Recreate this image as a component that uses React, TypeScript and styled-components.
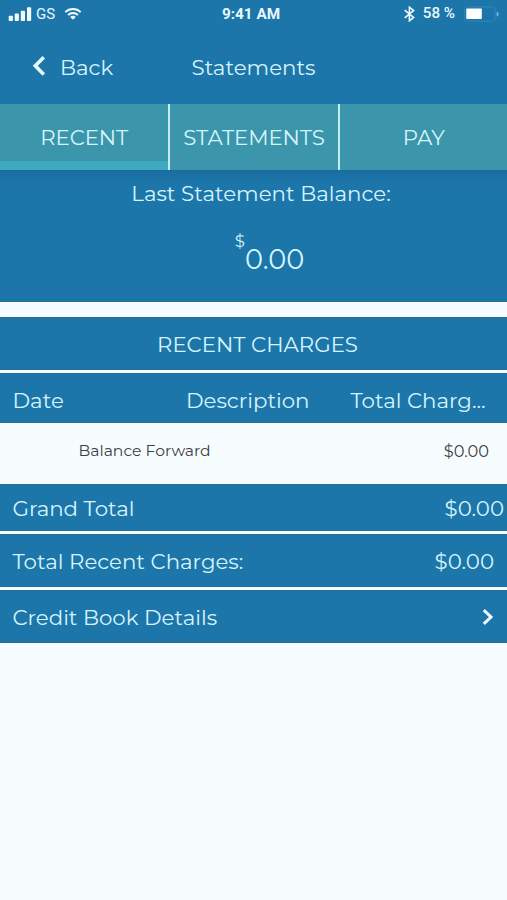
import React from "react";
import styled, { createGlobalStyle } from "styled-components";

const GlobalStyle = createGlobalStyle`
  * { box-sizing: border-box; }
  body { margin: 0; background: #f7fcff; }
`;

const BLUE = "#1c76aa";
const TEAL = "#3b96ab";
const PALE = "#d6f4fb";
const PAPER = "#f7fcff";

const Screen = styled.main`
  width: 507px;
  height: 900px;
  overflow: hidden;
  display: flex;
  flex-direction: column;
  background: ${PAPER};
  color: ${PALE};
  font-family: Montserrat, Inter, sans-serif;
  font-size: 21.3px;
  line-height: 26px;
  white-space: nowrap;
`;

const StatusBar = styled.div`
  flex: none;
  display: grid;
  grid-template-columns: 1fr auto 1fr;
  align-items: center;
  height: 28px;
  padding: 0 7px 0 8px;
  background: ${BLUE};
  color: #e9f8ff;
  font-family: Roboto, sans-serif;
  font-size: 15px;
  line-height: 18px;
`;

const StatusGroup = styled.div<{ $end?: boolean }>`
  display: flex;
  align-items: center;
  justify-content: ${(p) => (p.$end ? "flex-end" : "flex-start")};
`;

const Carrier = styled.span`
  margin: 0 9px 0 4px;
  font-size: 15px;
`;

const Clock = styled.span`
  margin-right: 6px;
  font-weight: 700;
  font-size: 15.3px;
`;

const BatteryLevel = styled.span`
  padding-bottom: 2px;
  margin: 0 9px 0 8px;
  font-size: 15.2px;
  font-weight: 500;
`;

const Header = styled.header`
  flex: none;
  display: grid;
  grid-template-columns: 1fr auto 1fr;
  align-items: center;
  height: 75.5px;
  padding: 2px 0 0 32px;
  background: ${BLUE};
`;

const BackLink = styled.div`
  display: flex;
  align-items: center;
  gap: 14px;
`;

const BackGlyph = styled.svg`
  margin-bottom: 2px;
`;

const Title = styled.div`
  margin-right: 32px;
`;

const Tabs = styled.nav`
  flex: none;
  display: grid;
  grid-template-columns: 169.5px 170px 1fr;
  height: 66.5px;
  background: ${TEAL};
`;

const Tab = styled.div<{ $active?: boolean; $last?: boolean }>`
  display: flex;
  align-items: center;
  justify-content: center;
  padding: 1px 0 0 1px;
  letter-spacing: -0.1px;
  border-right: ${(p) => (p.$last ? "none" : "2px solid #c3ecf0")};
  box-shadow: ${(p) => (p.$active ? "inset 0 -9px 0 #40a9c2" : "none")};
`;

const Balance = styled.section`
  flex: none;
  display: flex;
  flex-direction: column;
  align-items: center;
  height: 132px;
  padding: 10px 0 0 15px;
  background: linear-gradient(#1a6c9e, ${BLUE} 12px);
  box-shadow: inset 0 -1px 0 #2a7095;
`;

const BalanceLabel = styled.div``;

const Amount = styled.div`
  display: flex;
  align-items: flex-start;
  margin: 24px 0 0 17px;
`;

const Currency = styled.span`
  font-size: 16.5px;
  line-height: 22px;
`;

const AmountValue = styled.span`
  padding-top: 13px;
  font-size: 27.2px;
  line-height: 34px;
`;

const Band = styled.div<{ $height: number; $gap?: number; $right?: number }>`
  flex: none;
  display: flex;
  align-items: center;
  justify-content: space-between;
  height: ${(p) => p.$height}px;
  margin-top: ${(p) => p.$gap ?? 0}px;
  padding: 0 ${(p) => p.$right ?? 13}px 0 12.5px;
  background: ${BLUE};
  box-shadow: inset 0 1px 0 #2a7095, inset 0 -1px 0 #2a7095;
`;

const SectionTitle = styled(Band)`
  justify-content: center;
  padding: 0 0 0 8px;
`;

const Columns = styled(Band)`
  display: grid;
  grid-template-columns: 173.5px 164.5px 1fr;
  padding-top: 3px;
`;

const Entry = styled.div`
  flex: none;
  display: grid;
  grid-template-columns: 1fr auto;
  align-items: center;
  height: 61px;
  padding: 0 18px 5px 78.5px;
  color: #3c4043;
  font-size: 15.6px;
`;

const EntryAmount = styled.span`
  font-size: 16.2px;
`;

const SignalIcon = () => (
  <svg width="24" height="16" viewBox="0 0 24 16" fill="#f2fbff">
    <rect x="0.7" y="9.8" width="4.2" height="5.2" rx="0.8" />
    <rect x="6.7" y="7.6" width="4.2" height="7.4" rx="0.8" />
    <rect x="12.8" y="4.8" width="4.2" height="10.2" rx="0.8" />
    <rect x="19" y="1.2" width="4.2" height="13.8" rx="0.8" />
  </svg>
);

const WifiIcon = () => (
  <svg width="18" height="14" viewBox="0 0 18 14" fill="none" stroke="#f2fbff" strokeWidth="2">
    <path d="M1.3 5.1C5.6.9 12.4.9 16.7 5.1" />
    <path d="M4.1 8C6.9 5.3 11.1 5.3 13.9 8" />
    <path d="M6.2 9.9C7.8 8.5 10.2 8.5 11.8 9.9L9 12.8Z" fill="#f2fbff" stroke="none" />
  </svg>
);

const BluetoothIcon = () => (
  <svg width="11" height="16" viewBox="0 0 11 16" fill="none" stroke="#f2fbff" strokeWidth="1.6">
    <path d="M.7 4.2 9.6 11.5 5.4 14.8V1.2L9.6 4.5.7 11.8" />
  </svg>
);

const BatteryIcon = () => (
  <svg width="36" height="16" viewBox="0 0 36 16">
    <rect x="0.7" y="0.9" width="30.3" height="14.2" rx="2.5" fill="none" stroke="#3187ba" />
    <rect x="2.3" y="2.6" width="15.5" height="10.3" rx="0.6" fill="#fff" />
    <path d="M32.7 5.8c2.6.6 2.6 4.3 0 4.8z" fill="#7dbad9" />
  </svg>
);

const BackIcon = () => (
  <BackGlyph width="14" height="20" viewBox="0 0 14 20" fill="none" stroke="#e6f9fd" strokeWidth="3.6">
    <path d="M11.8 1.3 3.3 9.8l8.5 8.7" />
  </BackGlyph>
);

const ChevronIcon = () => (
  <svg width="12" height="16" viewBox="0 0 12 16" fill="none" stroke="#eefbff" strokeWidth="3">
    <path d="M1.8 1.1 9 8 1.8 14.9" />
  </svg>
);

export default function App() {
  return (
    <>
      <GlobalStyle />
      <Screen>
        <StatusBar>
          <StatusGroup>
            <SignalIcon />
            <Carrier>GS</Carrier>
            <WifiIcon />
          </StatusGroup>
          <Clock>9:41 AM</Clock>
          <StatusGroup $end>
            <BluetoothIcon />
            <BatteryLevel>58 %</BatteryLevel>
            <BatteryIcon />
          </StatusGroup>
        </StatusBar>
        <Header>
          <BackLink>
            <BackIcon />
            Back
          </BackLink>
          <Title>Statements</Title>
        </Header>
        <Tabs>
          <Tab $active>RECENT</Tab>
          <Tab>STATEMENTS</Tab>
          <Tab $last>PAY</Tab>
        </Tabs>
        <Balance>
          <BalanceLabel>Last Statement Balance:</BalanceLabel>
          <Amount>
            <Currency>$</Currency>
            <AmountValue>0.00</AmountValue>
          </Amount>
        </Balance>
        <SectionTitle $height={53} $gap={15}>RECENT CHARGES</SectionTitle>
        <Columns $height={50} $gap={3}>
          <span>Date</span>
          <span>Description</span>
          <span>Total Charg...</span>
        </Columns>
        <Entry>
          <span>Balance Forward</span>
          <EntryAmount>$0.00</EntryAmount>
        </Entry>
        <Band $height={47} $right={3}>
          <span>Grand Total</span>
          <span>$0.00</span>
        </Band>
        <Band $height={53} $gap={3}>
          <span>Total Recent Charges:</span>
          <span>$0.00</span>
        </Band>
        <Band $height={53} $gap={3}>
          <span>Credit Book Details</span>
          <ChevronIcon />
        </Band>
      </Screen>
    </>
  );
}
